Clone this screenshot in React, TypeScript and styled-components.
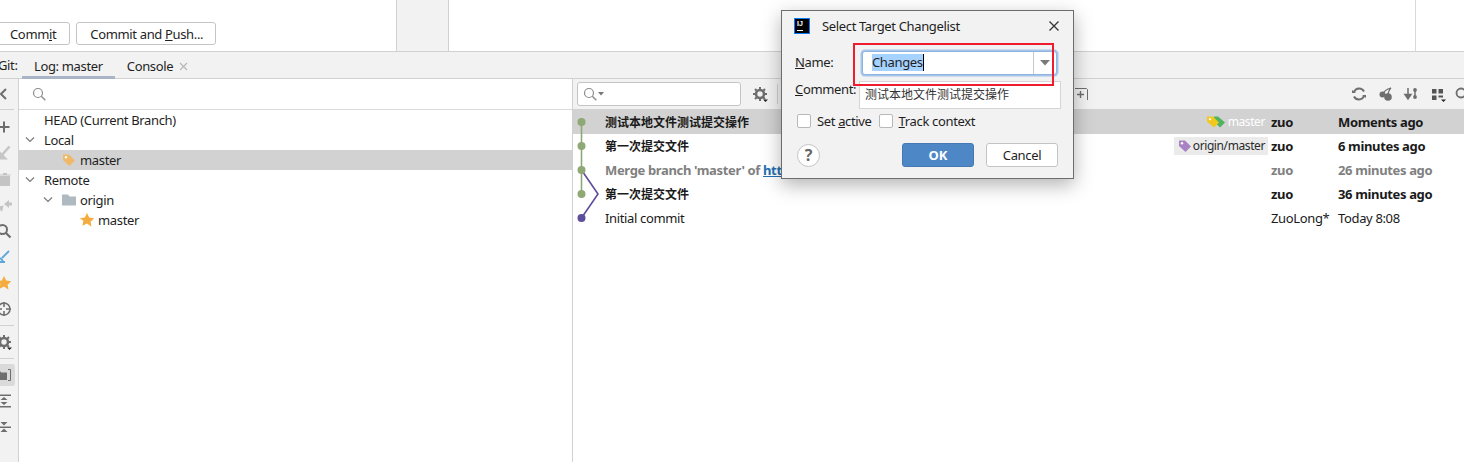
import React from "react";
import styled, { createGlobalStyle } from "styled-components";

const Global = createGlobalStyle`
  html, body { margin: 0; padding: 0; background: #fff; overflow: hidden; }
  body { font-family: "Noto Sans", "Noto Sans CJK SC", sans-serif; font-size: 13px; letter-spacing: -0.35px; color: #1f1f1f; }
  * { box-sizing: border-box; }
`;
const Page = styled.div`position: relative; width: 1464px; height: 462px; overflow: hidden; display: flex; flex-direction: column; background: #fff;`;

/* top */
const TopBar = styled.div`height: 52px; flex: none; display: flex; border-bottom: 1px solid #d1d1d1;`;
const CommitArea = styled.div`width: 396px; flex: none; display: flex; align-items: flex-end; gap: 6px; padding-bottom: 6px;`;
const PlainButton = styled.button<{ $clip?: boolean }>`
  height: 23px; padding: 0 12px 0 13px; background: #fff; border: 1px solid #c4c4c4; border-radius: 3px;
  font: inherit; letter-spacing: inherit; color: #1f1f1f; white-space: nowrap; line-height: 20px;
  ${(p) => (p.$clip ? "margin-left: -8px; padding-left: 17px; padding-right: 13px;" : "")}
`;
const GrayPane = styled.div`width: 53px; flex: none; background: #f2f2f2; border-left: 1px solid #d1d1d1; border-right: 1px solid #d1d1d1;`;
const BlankPane = styled.div`flex: 1; border-right: 1px solid #d9d9d9;`;
const EdgePane = styled.div`width: 48px; flex: none;`;

/* tabs */
const TabBar = styled.div`height: 27px; flex: none; display: flex; align-items: stretch; background: #f2f2f2; border-bottom: 1px solid #d1d1d1;`;
const GitLabel = styled.span`margin-left: -2px; width: 24px; line-height: 26px; flex: none;`;
const Tab = styled.div<{ $active?: boolean }>`
  display: flex; align-items: center; gap: 6px; padding: 0 12px; height: 27px; line-height: 26px;
  ${(p) => (p.$active ? "box-shadow: inset 0 -3px 0 #a9b5c6;" : "")}
`;
const TabClose = styled.svg`display: block; width: 9px; height: 9px; margin-top: 1px;`;

/* main */
const Main = styled.div`flex: 1; display: flex; min-height: 0;`;
const Sidebar = styled.div`width: 19px; flex: none; background: #f2f2f2; border-right: 1px solid #d1d1d1; display: flex; flex-direction: column; overflow: hidden;`;
const SideTop = styled.div`height: 30px; display: flex; align-items: center;`;
const SideItem = styled.div<{ $on?: boolean }>`
  height: 26px; width: 15px; display: flex; align-items: center; justify-content: center; flex: none; position: relative;
  ${(p) => (p.$on ? "background: #dadada; height: 22px; margin: 2px 0; border-radius: 0 3px 3px 0;" : "")}
`;
const SideIconBox = styled.svg`display: block; width: 16px; height: 16px; margin-left: -7px; flex: none;`;
const SideSep = styled.div<{ $gapTop: number; $gapBottom: number }>`height: 1px; width: 14px; background: #d1d1d1; flex: none; margin: ${(p) => p.$gapTop}px 0 ${(p) => p.$gapBottom}px;`;

const TreePane = styled.div`width: 554px; flex: none; border-right: 1px solid #d1d1d1; display: flex; flex-direction: column;`;
const TreeSearch = styled.div`height: 31px; flex: none; border-bottom: 1px solid #d9d9d9; display: flex; align-items: center; padding-left: 12px;`;
const TreeBody = styled.div`display: flex; flex-direction: column;`;
const TreeRow = styled.div<{ $indent: number; $selected?: boolean; $gap?: number }>`
  height: 20px; display: flex; align-items: center; line-height: 20px; padding-left: ${(p) => p.$indent}px;
  gap: ${(p) => p.$gap ?? 3}px; background: ${(p) => (p.$selected ? "#d2d2d2" : "transparent")};
`;
const Chevron = styled.svg`width: 10px; height: 6px; flex: none; margin-right: 9px; display: block;`;
const TreeIcon = styled.svg`width: 16px; height: 16px; flex: none; display: block;`;
const FolderIcon = styled(TreeIcon)`margin-left: -1px; margin-right: 3px;`;

const LogPane = styled.div`flex: 1; min-width: 0; display: flex; flex-direction: column; position: relative;`;
const LogToolbar = styled.div`height: 30px; flex: none; background: #f2f2f2; display: flex; align-items: center; padding-left: 4px;`;
const LogSearch = styled.div`width: 164px; height: 24px; flex: none; background: #fff; border: 1px solid #c4c4c4; border-radius: 3px; display: flex; align-items: center; padding-left: 4px;`;
const ToolIcon = styled.svg<{ $ml?: number }>`width: 16px; height: 16px; flex: none; display: block; margin-left: ${(p) => p.$ml ?? 0}px;`;
const ToolSep = styled.div`width: 1px; height: 20px; background: #d1d1d1; margin-left: 9px; flex: none;`;
const ToolLeft = styled.div`display: flex; align-items: center; margin-left: 11px;`;
const ToolFill = styled.div`flex: 1;`;
const ToolRight = styled.div`display: flex; align-items: center; gap: 10px; margin-right: -6px;`;
const PlusBox = styled(ToolIcon)`margin-right: 261px;`;
const SearchCaret = styled.svg`display: block; width: 6px; height: 4px;`;

const Rows = styled.div`flex: 1; position: relative; display: flex; flex-direction: column;`;
const Row = styled.div<{ $selected?: boolean }>`
  height: ${(p) => (p.$selected ? 25 : 24)}px; padding-top: ${(p) => (p.$selected ? 1 : 0)}px; flex: none; display: flex; align-items: center; line-height: 24px;
  background: ${(p) => (p.$selected ? "#d2d2d2" : "transparent")};
`;
const Subject = styled.div<{ $bold?: boolean; $dim?: boolean; $cjk?: boolean }>`
  flex: 1; min-width: 0; margin-left: 32px; white-space: nowrap; overflow: hidden;
  font-weight: ${(p) => (p.$bold ? 700 : 400)}; color: ${(p) => (p.$dim ? "#808080" : "#1a1a1a")};
  ${(p) => (p.$cjk ? "font-size: 12px; letter-spacing: 0; padding-top: 2px;" : "")}
  a { color: #2470b3; text-decoration: underline; }
`;
const TagCell = styled.div<{ $chip?: boolean; $light?: boolean }>`
  display: flex; align-items: center; height: 18px; padding: 0 3px; margin-right: 3px; font-size: 12px; letter-spacing: -0.4px;
  background: ${(p) => (p.$chip ? "#ebebeb" : "transparent")}; color: ${(p) => (p.$light ? "#ffffff" : "#2a2a2a")};
`;
const DoubleTagIcon = styled.svg`display: block; flex: none; width: 22px; height: 16px;`;
const Author = styled.div<{ $bold?: boolean; $dim?: boolean }>`
  width: 67px; flex: none; white-space: nowrap; font-weight: ${(p) => (p.$bold ? 700 : 400)}; color: ${(p) => (p.$dim ? "#808080" : "#1a1a1a")};
`;
const DateCell = styled(Author)`width: 126px;`;
const GraphSvg = styled.svg`position: absolute; left: 0; top: 0; width: 32px; height: 130px; pointer-events: none;`;

/* dialog */
const Dialog = styled.div`
  position: absolute; left: 781px; top: 10px; width: 293px; height: 169px; background: #f2f2f2; border: 1px solid #6d6d6d;
  box-shadow: 0 6px 18px rgba(0,0,0,.3); display: flex; flex-direction: column; padding: 0 15px 0 13px;
`;
const DialogTitle = styled.div`height: 28px; display: flex; align-items: center; flex: none; padding-top: 1px;`;
const Logo = styled.div`
  width: 16px; height: 16px; background: #000; border: 1px solid #087cfa; color: #fff; position: relative; flex: none; letter-spacing: 0;
  font: 700 7px/9px "Liberation Sans", sans-serif; padding-left: 2px; margin: 0 12px 0 -1px;
  &::after { content: ""; position: absolute; left: 2px; bottom: 2px; width: 6px; height: 1px; background: #fff; }
`;
const TitleText = styled.div`flex: 1;`;
const CloseIcon = styled.svg`width: 12px; height: 12px; display: block; margin-right: -2px;`;
const NameRow = styled.div`display: flex; align-items: center; height: 25px; margin-top: 11px; flex: none;`;
const Label = styled.span`width: 67px; flex: none; white-space: nowrap; margin-top: -1px;`;
const Combo = styled.div`
  width: 195px; height: 24px; display: flex; background: #fff; border: 1px solid #8fb4e0; border-radius: 3px;
  box-shadow: 0 0 0 1.5px #a5c5ec; margin-right: -2px;
`;
const ComboText = styled.div`flex: 1; padding-left: 9px; display: flex; align-items: center; line-height: 17px;`;
const Selected = styled.span`background: #a6d2ff; border-right: 1px solid #000; line-height: 17px;`;
const ComboArrow = styled.div`width: 23px; flex: none; border-left: 1px solid #c9c9c9; display: flex; align-items: center; justify-content: center;`;
const ArrowGlyph = styled.svg`display: block; width: 10px; height: 6px;`;
const CommentRow = styled.div`display: flex; height: 28px; margin-top: 6px; flex: none; margin-right: -4px;`;
const CommentLabel = styled(Label)`width: 64px; margin-top: 0; line-height: 16px;`;
const CommentBox = styled.div`flex: 1; background: #fff; border: 1px solid #d6d6d6; padding-left: 5px; font-size: 12px; letter-spacing: 0; line-height: 26px; color: #333; white-space: nowrap; margin-right: 1px;`;
const CheckRow = styled.div`display: flex; align-items: center; height: 18px; margin-top: 3px; flex: none; padding-left: 2px;`;
const CheckBox = styled.span`width: 14px; height: 14px; background: #fff; border: 1px solid #b8b8b8; border-radius: 2px; flex: none; margin-right: 6px;`;
const CheckLabel = styled.span`margin-right: 7px; white-space: nowrap;`;
const ButtonRow = styled.div`display: flex; align-items: center; margin-top: 13px; flex: none; padding-left: 2px;`;
const Help = styled.div`width: 23px; height: 23px; border-radius: 50%; background: #fff; border: 1px solid #c4c4c4; text-align: center; font-weight: 700; color: #666; font-size: 16px; line-height: 20px; flex: none;`;
const OkButton = styled.button`
  margin-left: 82px; width: 72px; height: 24px; background: #4e87c6; border: 1px solid #4579b3; border-radius: 3px;
  color: #fff; font: 700 13px "Noto Sans", sans-serif; line-height: 20px; padding: 0 0 1px;
`;
const CancelButton = styled.button`
  margin-left: 12px; width: 72px; height: 24px; background: #fff; border: 1px solid #c4c4c4; border-radius: 3px;
  color: #1f1f1f; font: inherit; letter-spacing: inherit; line-height: 20px; padding: 0 0 1px;
`;
const RedBox = styled.div`position: absolute; left: 853px; top: 43px; width: 201px; height: 43px; border: 2px solid #ee1c2e; pointer-events: none;`;

const g = "#6e6e6e";
const Tag = ({ color }: { color: string }) => (
  <TreeIcon viewBox="0 0 16 16"><path d="M2 2.5h6l6 6-5.5 5.5-6.5-6z" fill={color} /><circle cx="5" cy="5.2" r="1.2" fill="#fff" /></TreeIcon>
);
const DoubleTag = () => (
  <DoubleTagIcon viewBox="0 0 22 16">
    <path d="M8 2.5h4l7 6-5 5-6-6z" fill="#4fb35f" />
    <path d="M1 2.5h6l6 6-5 5-7-6z" fill="#f2c81f" /><circle cx="4" cy="5.2" r="1.1" fill="#fff" />
  </DoubleTagIcon>
);
const Mag = ({ c = "#8c8c8c" }: { c?: string }) => (
  <ToolIcon viewBox="0 0 16 16"><circle cx="7" cy="7" r="4.5" fill="none" stroke={c} strokeWidth="1.2" /><path d="M10.3 10.3l4 4" stroke={c} strokeWidth="1.4" /></ToolIcon>
);
const Gear = () => (
  <ToolIcon viewBox="0 0 16 16">
    <circle cx="8" cy="8" r="4" fill="none" stroke={g} strokeWidth="2.6" />
    <path d="M8 1v3M8 12v3M1 8h3M12 8h3M3 3l2 2M11 11l2 2M13 3l-2 2M5 11l-2 2" stroke={g} strokeWidth="2" />
    <path d="M11 13.5h5l-2.5 2.5z" fill="#222" />
  </ToolIcon>
);
const side = {
  back: <path d="M10 3L5 8l5 5" fill="none" stroke={g} strokeWidth="2" />,
  plus: <path d="M8 2.5v11M2.5 8h11" stroke={g} strokeWidth="2" />,
  check: <><path d="M13.500 1.500L5 11" stroke="#c6c6c6" strokeWidth="2.600" /><path d="M4 6.500v8h8z" fill="#c6c6c6" /></>,
  trash: <path d="M4 5h10v10H4zM7 2h4v1.500H7zM3.500 3.500h11V4.500h-11z" fill="#c4c4c4" />,
  arrows: <path d="M8 7l5-4v2.500h3v3h-3V11zM7.500 8.500L6 15l-1.500-2L2 15.500 .5 14l2.500-2.500L1 10z" fill="#c4c4c4" />,
  search: <><circle cx="6.5" cy="6.5" r="4.5" fill="none" stroke={g} strokeWidth="2" /><path d="M10 10l4.5 4.5" stroke={g} strokeWidth="2.2" /></>,
  brush: <path d="M13 2l-7 7M3 13h6M4 9l3 3M1 10l3 4" stroke="#5aa7dc" strokeWidth="1.8" fill="none" />,
  star: <path d="M8 1l2.200 4.600 5 .7-3.600 3.500.9 5L8 11.400l-4.500 2.400.9-5L.8 6.300l5-.7z" fill="#f4ac3e" />,
  target: <><circle cx="8" cy="8" r="6" fill="none" stroke={g} strokeWidth="1.6" /><path d="M8 1v5M8 10v5M1 8h5M10 8h5" stroke={g} strokeWidth="1.6" /></>,
  gear: <><circle cx="8" cy="8" r="4" fill="none" stroke={g} strokeWidth="2.600" /><path d="M8 1v3M8 12v3M1 8h3M12 8h3M3 3l2 2M11 11l2 2M13 3l-2 2M5 11l-2 2" stroke={g} strokeWidth="2" /><path d="M11 13.500h5l-2.500 2.500z" fill="#222" /></>,
  folder: <><path d="M0 4h4l1 1.500h6V13H0z" fill={g} /><path d="M12 2.500h2.500v11H12" fill="none" stroke={g} strokeWidth="1" /></>,
  expand: <path d="M1 1.500h14v1.500H1zM1 13h14v1.500H1zM8 4l3.500 3h-7zM8 12l3.500-3h-7z" fill={g} />,
  collapse: <path d="M1 7.500h14v1.500H1zM4.500 3h7L8 6.500zM8 9.500l3.500 3.500h-7z" fill={g} />,
};
const Side = ({ k, on }: { k: keyof typeof side; on?: boolean }) => (
  <SideItem $on={on}><SideIconBox viewBox="0 0 16 16">{side[k]}</SideIconBox></SideItem>
);
const Down = () => <Chevron viewBox="0 0 10 6"><path d="M1 .5l4 4 4-4" fill="none" stroke="#777" strokeWidth="1.100" /></Chevron>;

export default function App() {
  return (
    <Page>
      <Global />
      <TopBar>
        <CommitArea>
          <PlainButton $clip>Comm<u>i</u>t</PlainButton>
          <PlainButton>Commit and <u>P</u>ush...</PlainButton>
        </CommitArea>
        <GrayPane />
        <BlankPane />
        <EdgePane />
      </TopBar>
      <TabBar>
        <GitLabel>Git:</GitLabel>
        <Tab $active>Log: master</Tab>
        <Tab>Console
          <TabClose viewBox="0 0 9 9"><path d="M1 1l7 7M8 1L1 8" stroke="#b5b5b5" strokeWidth="1.100" /></TabClose>
        </Tab>
      </TabBar>
      <Main>
        <Sidebar>
          <SideTop><Side k="back" /></SideTop>
          <SideSep $gapTop={0} $gapBottom={4} />
          <Side k="plus" /><Side k="check" /><Side k="trash" /><Side k="arrows" />
          <Side k="search" /><Side k="brush" /><Side k="star" /><Side k="target" />
          <SideSep $gapTop={3} $gapBottom={3} />
          <Side k="gear" />
          <SideSep $gapTop={3} $gapBottom={3} />
          <Side k="folder" on /><Side k="expand" /><Side k="collapse" />
        </Sidebar>
        <TreePane>
          <TreeSearch><Mag /></TreeSearch>
          <TreeBody>
            <TreeRow $indent={25}>HEAD (Current Branch)</TreeRow>
            <TreeRow $indent={6} $gap={0}><Down />Local</TreeRow>
            <TreeRow $indent={42} $selected><Tag color="#f0b868" />master</TreeRow>
            <TreeRow $indent={6} $gap={0}><Down />Remote</TreeRow>
            <TreeRow $indent={24} $gap={0}>
              <Down />
              <FolderIcon viewBox="0 0 16 16"><path d="M1 2.500h6l1.500 2H15v9H1z" fill="#aeb9c0" /></FolderIcon>
              origin
            </TreeRow>
            <TreeRow $indent={60}>
              <TreeIcon viewBox="0 0 16 16"><path d="M8 1l2.200 4.600 5 .7-3.600 3.500.9 5L8 11.400l-4.500 2.400.9-5L.8 6.300l5-.7z" fill="#f4ac3e" /></TreeIcon>
              master
            </TreeRow>
          </TreeBody>
        </TreePane>
        <LogPane>
          <LogToolbar>
            <LogSearch>
              <Mag />
              <SearchCaret viewBox="0 0 6 4"><path d="M0 0h6L3 3.500z" fill="#777" /></SearchCaret>
            </LogSearch>
            <ToolLeft><Gear /><ToolSep /></ToolLeft>
            <ToolFill />
            <PlusBox viewBox="0 0 16 16"><path d="M1 2.500h11.500l1 1V14" fill="none" stroke={g} strokeWidth="1" /><path d="M6.500 5v7M3 8.500h7" stroke={g} strokeWidth="1.400" /></PlusBox>
            <ToolRight>
              <ToolIcon viewBox="0 0 16 16"><path d="M13 5.500A5.500 5.500 0 0 0 3 6M3 10.500A5.500 5.500 0 0 0 13 10" fill="none" stroke={g} strokeWidth="2" /><path d="M1 4l4 3H1zM15 12l-4-3h4z" fill={g} /></ToolIcon>
              <ToolIcon $ml={1} viewBox="0 0 16 16"><circle cx="10" cy="11" r="3.800" fill={g} /><circle cx="4.500" cy="8.500" r="3" fill={g} /><path d="M13 2C9 3 6 5 5 8M13 2c-2 2-3 5-3 8" fill="none" stroke={g} strokeWidth="1.200" /></ToolIcon>
              <ToolIcon $ml={-1} viewBox="0 0 16 16"><path d="M5 2v9M2 8.500L5 13l3-4.500z" fill={g} stroke={g} strokeWidth="1.500" /><circle cx="12" cy="4" r="1.900" fill={g} /><circle cx="12" cy="11" r="1.900" fill={g} /><path d="M12 4v7" stroke={g} strokeWidth="1.500" /></ToolIcon>
              <ToolIcon $ml={1} viewBox="0 0 16 16"><path d="M2 3h4.500v4.500H2zM8.500 3H13v4.500H8.500zM2 9.500h4.500V14H2zM8.500 9.500H13v2H8.500z" fill="#555" /><path d="M11 13.500h5l-2.500 2.500z" fill="#222" /></ToolIcon>
              <ToolIcon $ml={-2} viewBox="0 0 16 16"><circle cx="7" cy="7" r="4.500" fill="none" stroke={g} strokeWidth="1.800" /><path d="M10 10l5 5" stroke={g} strokeWidth="2" /></ToolIcon>
            </ToolRight>
          </LogToolbar>
          <Rows>
            <Row $selected>
              <Subject $bold $cjk>测试本地文件测试提交操作</Subject>
              <TagCell $light><DoubleTag />master</TagCell>
              <Author $bold>zuo</Author><DateCell $bold>Moments ago</DateCell>
            </Row>
            <Row>
              <Subject $bold $cjk>第一次提交文件</Subject>
              <TagCell $chip><Tag color="#a883c4" />origin/master</TagCell>
              <Author $bold>zuo</Author><DateCell $bold>6 minutes ago</DateCell>
            </Row>
            <Row>
              <Subject $bold $dim>Merge branch 'master' of <a>https://github.com/ZuoLong/test</a></Subject>
              <Author $bold $dim>zuo</Author><DateCell $bold $dim>26 minutes ago</DateCell>
            </Row>
            <Row>
              <Subject $bold $cjk>第一次提交文件</Subject>
              <Author $bold>zuo</Author><DateCell $bold>36 minutes ago</DateCell>
            </Row>
            <Row>
              <Subject>Initial commit</Subject>
              <Author>ZuoLong*</Author><DateCell>Today 8:08</DateCell>
            </Row>
            <GraphSvg viewBox="0 0 32 130">
              <path d="M8.500 13v72" stroke="#8fa876" strokeWidth="1.600" fill="none" />
              <path d="M8.500 61L25 85 8.500 109" stroke="#5e4d9a" strokeWidth="1.600" fill="none" />
              <circle cx="8.500" cy="13" r="4" fill="#8fa876" />
              <circle cx="8.500" cy="37" r="4" fill="#8fa876" />
              <circle cx="8.500" cy="61" r="4" fill="#8fa876" />
              <circle cx="8.500" cy="85" r="4" fill="#8fa876" />
              <circle cx="8.500" cy="109" r="4" fill="#5e4d9a" />
            </GraphSvg>
          </Rows>
        </LogPane>
      </Main>

      <Dialog>
        <DialogTitle>
          <Logo>IJ</Logo>
          <TitleText>Select Target Changelist</TitleText>
          <CloseIcon viewBox="0 0 12 12"><path d="M1.500 1.500l9 9M10.500 1.500l-9 9" stroke="#333" strokeWidth="1.300" /></CloseIcon>
        </DialogTitle>
        <NameRow>
          <Label><u>N</u>ame:</Label>
          <Combo>
            <ComboText><Selected>Changes</Selected></ComboText>
            <ComboArrow><ArrowGlyph viewBox="0 0 10 6"><path d="M0 0h10L5 5.500z" fill="#7a7a7a" /></ArrowGlyph></ComboArrow>
          </Combo>
        </NameRow>
        <CommentRow>
          <CommentLabel><u>C</u>omment:</CommentLabel>
          <CommentBox>测试本地文件测试提交操作</CommentBox>
        </CommentRow>
        <CheckRow>
          <CheckBox /><CheckLabel>Set <u>a</u>ctive</CheckLabel>
          <CheckBox /><CheckLabel><u>T</u>rack context</CheckLabel>
        </CheckRow>
        <ButtonRow>
          <Help>?</Help>
          <OkButton>OK</OkButton>
          <CancelButton>Cancel</CancelButton>
        </ButtonRow>
      </Dialog>
      <RedBox />
    </Page>
  );
}
